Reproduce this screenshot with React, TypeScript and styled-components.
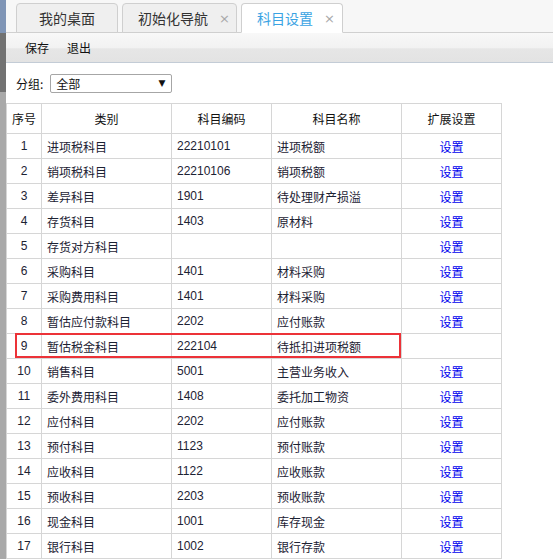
import React from 'react';
import styled, { createGlobalStyle } from 'styled-components';

const GlobalStyle = createGlobalStyle`
    html, body {
        margin: 0;
        padding: 0;
        background: #ffffff;
        overflow: hidden;
    }
    body {
        font-family: 'Liberation Sans', 'Noto Sans CJK SC', sans-serif;
        font-size: 12px;
        color: #222;
    }
`;

interface Subject {
    type: string;
    code: string;
    name: string;
    setting: boolean;
}

const subjects: Subject[] = [
    { type: '进项税科目', code: '22210101', name: '进项税额', setting: true },
    { type: '销项税科目', code: '22210106', name: '销项税额', setting: true },
    { type: '差异科目', code: '1901', name: '待处理财产损溢', setting: true },
    { type: '存货科目', code: '1403', name: '原材料', setting: true },
    { type: '存货对方科目', code: '', name: '', setting: true },
    { type: '采购科目', code: '1401', name: '材料采购', setting: true },
    { type: '采购费用科目', code: '1401', name: '材料采购', setting: true },
    { type: '暂估应付款科目', code: '2202', name: '应付账款', setting: true },
    { type: '暂估税金科目', code: '222104', name: '待抵扣进项税额', setting: false },
    { type: '销售科目', code: '5001', name: '主营业务收入', setting: true },
    { type: '委外费用科目', code: '1408', name: '委托加工物资', setting: true },
    { type: '应付科目', code: '2202', name: '应付账款', setting: true },
    { type: '预付科目', code: '1123', name: '预付账款', setting: true },
    { type: '应收科目', code: '1122', name: '应收账款', setting: true },
    { type: '预收科目', code: '2203', name: '预收账款', setting: true },
    { type: '现金科目', code: '1001', name: '库存现金', setting: true },
    { type: '银行科目', code: '1002', name: '银行存款', setting: true },
];

const HEADER_H = 30;
const ROW_H = 25;
const MARKED_ROW = 8; // 第9行

const App = () => {
    return (
        <Page>
            <GlobalStyle />
            <Strip />
            <Main>
                <TabBar>
                    <Tab>我的桌面</Tab>
                    <Tab closable>
                        初始化导航<Close>×</Close>
                    </Tab>
                    <Tab active closable>
                        科目设置<Close>×</Close>
                    </Tab>
                </TabBar>
                <Toolbar>
                    <ToolButton>保存</ToolButton>
                    <ToolButton>退出</ToolButton>
                </Toolbar>
                <FilterRow>
                    <Label>分组:</Label>
                    <Select>
                        <span>全部</span>
                        <Arrow>▼</Arrow>
                    </Select>
                </FilterRow>
                <TableWrap>
                    <Table>
                        <colgroup>
                            <col style={{ width: 35 }} />
                            <col style={{ width: 130 }} />
                            <col style={{ width: 100 }} />
                            <col style={{ width: 130 }} />
                            <col style={{ width: 100 }} />
                        </colgroup>
                        <thead>
                            <tr>
                                <Th>序号</Th>
                                <Th>类别</Th>
                                <Th>科目编码</Th>
                                <Th>科目名称</Th>
                                <Th>扩展设置</Th>
                            </tr>
                        </thead>
                        <tbody>
                            {subjects.map((s, i) => (
                                <tr key={i}>
                                    <Td align="center">{i + 1}</Td>
                                    <Td>{s.type}</Td>
                                    <Td>{s.code}</Td>
                                    <Td>{s.name}</Td>
                                    <Td align="center">{s.setting && <SetLink>设置</SetLink>}</Td>
                                </tr>
                            ))}
                        </tbody>
                    </Table>
                    <Marker style={{ top: HEADER_H + MARKED_ROW * ROW_H }} />
                </TableWrap>
            </Main>
        </Page>
    );
};

export default App;

const Page = styled.div`
    display: flex;
    width: 553px;
    height: 559px;
    overflow: hidden;
`;

const Strip = styled.div`
    flex: 0 0 6px;
    background: linear-gradient(
        to bottom,
        #7f95b6 0,
        #7f95b6 33px,
        #727272 33px,
        #727272 92px,
        #a9a9a9 92px,
        #a9a9a9 100%
    );
`;

const Main = styled.div`
    flex: 1;
    display: flex;
    flex-direction: column;
    min-width: 0;
`;

const TabBar = styled.div`
    display: flex;
    align-items: flex-end;
    gap: 4px;
    height: 33px;
    padding-left: 10px;
    background: #f7f7f7;
    border-bottom: 1px solid #d0d0d0;
    box-sizing: border-box;
`;

const Tab = styled.div<{ active?: boolean; closable?: boolean }>`
    display: flex;
    align-items: center;
    justify-content: ${(p) => (p.closable ? 'flex-start' : 'center')};
    height: 30px;
    box-sizing: border-box;
    margin-bottom: -1px;
    padding: ${(p) => (p.closable ? '0 0 0 15px' : '0')};
    width: ${(p) => (p.closable ? (p.active ? '102px' : '115px') : '102px')};
    border: 1px solid #cfcfcf;
    border-bottom: ${(p) => (p.active ? '1px solid #ffffff' : '1px solid #cfcfcf')};
    border-radius: 4px 4px 0 0;
    background: ${(p) => (p.active ? '#ffffff' : '#efefef')};
    color: ${(p) => (p.active ? '#3aa3e3' : '#333')};
    font-family: 'Noto Sans CJK SC', sans-serif;
    font-size: 14px;
`;

const Close = styled.span`
    margin-left: 11px;
    color: #a8a8a8;
    font-family: 'DejaVu Sans', sans-serif;
    font-size: 13px;
`;

const Toolbar = styled.div`
    display: flex;
    align-items: center;
    gap: 18px;
    height: 29px;
    padding-left: 19px;
    background: linear-gradient(to bottom, #f8f8f8 0%, #f2f2f2 50%, #e6e6e6 55%, #e3e3e3 100%);
    border-bottom: 1px solid #c3ccd6;
`;

const ToolButton = styled.span`
    font-family: 'Noto Sans CJK SC', sans-serif;
    font-size: 12px;
    color: #111;
    cursor: pointer;
`;

const FilterRow = styled.div`
    display: flex;
    align-items: center;
    height: 40px;
    padding-left: 10px;
`;

const Label = styled.span`
    font-family: 'Noto Sans CJK SC', sans-serif;
    font-size: 12px;
    color: #111;
    margin-right: 7px;
`;

const Select = styled.div`
    display: flex;
    align-items: center;
    justify-content: space-between;
    width: 122px;
    height: 19px;
    box-sizing: border-box;
    padding: 0 6px 0 5px;
    border: 1px solid #a6a6a6;
    border-radius: 2px;
    background: #ffffff;
    font-family: 'Noto Sans CJK SC', sans-serif;
    font-size: 12px;
    color: #111;
`;

const Arrow = styled.span`
    font-family: 'DejaVu Sans', sans-serif;
    font-size: 9px;
    color: #111;
`;

const TableWrap = styled.div`
    position: relative;
    width: 495px;
`;

const Table = styled.table`
    border-collapse: collapse;
    table-layout: fixed;
    width: 495px;
`;

const Th = styled.th`
    height: 29px;
    padding: 0;
    border: 1px solid #d6d6d6;
    font-weight: normal;
    font-family: 'Noto Sans CJK SC', sans-serif;
    font-size: 12px;
    color: #111;
    text-align: center;
`;

const Td = styled.td<{ align?: string }>`
    height: 24px;
    padding: 0 5px;
    border: 1px solid #d6d6d6;
    text-align: ${(p) => p.align || 'left'};
    font-family: 'Liberation Sans', 'Noto Sans CJK SC', sans-serif;
    font-size: 12px;
    color: #1c2233;
    white-space: nowrap;
    overflow: hidden;
`;

const SetLink = styled.a`
    color: #0000ee;
    font-family: 'Noto Sans CJK SC', sans-serif;
    cursor: pointer;
`;

const Marker = styled.div`
    position: absolute;
    left: 9px;
    width: 386px;
    height: 25px;
    box-sizing: border-box;
    border: 2px solid #ec3238;
    pointer-events: none;
`;
